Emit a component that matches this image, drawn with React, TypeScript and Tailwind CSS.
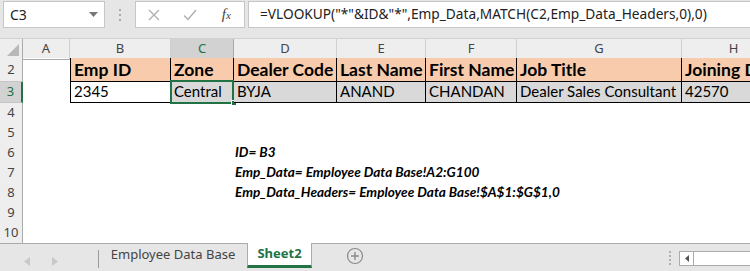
import React from 'react';

const ui = "font-['Noto_Sans','Liberation_Sans',sans-serif]";
const cell = "font-['Lato','Liberation_Sans',sans-serif]";
const gridCols = 'grid grid-cols-[23px_47px_101px_63px_103px_89px_91px_165px_104px]';

const headers = ['Emp ID', 'Zone', 'Dealer Code', 'Last Name', 'First Name', 'Job Title', 'Joining Date'];
const values = ['2345', 'Central', 'BYJA', 'ANAND', 'CHANDAN', 'Dealer Sales Consultant', '42570'];
const letters = ['A', 'B', 'C', 'D', 'E', 'F', 'G', 'H'];

const notes: Record<number, string> = {
  6: 'ID= B3',
  7: 'Emp_Data= Employee Data Base!A2:G100',
  8: 'Emp_Data_Headers= Employee Data Base!$A$1:$G$1,0',
};

const RowHead = ({ n, active }: { n: number; active?: boolean }) => (
  <div
    className={
      active
        ? `${ui} flex items-center justify-center bg-[#d2d2d2] text-[#217346] text-[13px] border-b border-[#c6c6c6] border-r-2 border-r-[#217346]`
        : `${ui} flex items-center justify-center bg-[#eeeeee] text-[#444] text-[13px] border-b border-[#c6c6c6] border-r border-r-[#ababab]`
    }
  >
    {n}
  </div>
);

const FormulaBar = () => (
  <div className={`${ui} h-[38px] bg-[#e6e6e6] flex items-start pt-[1px]`}>
    <div className="ml-[3px] w-[102px] h-[27px] bg-white border border-[#c6c6c6] flex items-center justify-between pl-[6px] pr-[6px]">
      <span className="text-[14px] text-[#222]">C3</span>
      <svg width="9" height="5" viewBox="0 0 9 5"><path d="M0 0h9L4.5 5z" fill="#777" /></svg>
    </div>
    <div className="w-[30px] h-[27px] flex flex-col items-center justify-center gap-[3px]">
      <span className="w-[2px] h-[2px] bg-[#aaa]" />
      <span className="w-[2px] h-[2px] bg-[#aaa]" />
      <span className="w-[2px] h-[2px] bg-[#aaa]" />
    </div>
    <div className="w-[110px] h-[27px] bg-white border border-[#c6c6c6] flex items-center">
      <div className="w-[36px] flex justify-center">
        <svg width="12" height="12" viewBox="0 0 12 12"><path d="M1 1l10 10M11 1L1 11" stroke="#b0b0b0" strokeWidth="1.4" /></svg>
      </div>
      <div className="w-[38px] flex justify-center">
        <svg width="14" height="12" viewBox="0 0 14 12"><path d="M1 6.5l4 4L13 1" stroke="#b0b0b0" strokeWidth="1.5" fill="none" /></svg>
      </div>
      <div className="w-[36px] flex justify-center">
        <span className="font-['Liberation_Serif',serif] italic text-[15px] text-[#444] leading-none">
          f<span className="text-[11px]">x</span>
        </span>
      </div>
    </div>
    <div className="ml-[3px] flex-1 h-[27px] bg-white border border-[#c6c6c6] border-r-0 flex items-center pl-[11px] overflow-hidden">
      <span className="text-[13.7px] text-[#222] whitespace-nowrap">
        =VLOOKUP("*"&amp;ID&amp;"*",Emp_Data,MATCH(C2,Emp_Data_Headers,0),0)
      </span>
    </div>
  </div>
);

const ColumnHeaders = () => (
  <div className={`${gridCols} ${ui} h-[20px] bg-[#eeeeee] border-t border-[#d0d0d0]`}>
    <div className="flex items-end justify-end pr-[3px] pb-[3px] border-r border-b border-[#ababab]">
      <svg width="12" height="12" viewBox="0 0 12 12"><path d="M12 0v12H0z" fill="#b8b8b8" /></svg>
    </div>
    {letters.map((l) =>
      l === 'C' ? (
        <div key={l} className="flex items-center justify-center text-[13px] text-[#217346] bg-[#d2d2d2] border-r border-[#ababab] border-b-2 border-b-[#217346]">
          {l}
        </div>
      ) : (
        <div key={l} className="flex items-center justify-center text-[13px] text-[#444] border-r border-[#d0d0d0] border-b border-b-[#ababab]">
          {l}
        </div>
      )
    )}
  </div>
);

const HeaderRow = () => (
  <div className={`${gridCols} h-[25px]`}>
    <RowHead n={2} />
    <div />
    {headers.map((h, i) => (
      <div
        key={h}
        className={`${cell} bg-[#f8cbad] font-bold text-[17.5px] text-black leading-none flex items-end pb-[3px] pl-[3px] whitespace-nowrap overflow-hidden border-r border-b border-black ${i === 0 ? 'border-l' : ''}`}
      >
        {h}
      </div>
    ))}
  </div>
);

const ValueRow = () => (
  <div className={`${gridCols} h-[21px]`}>
    <RowHead n={3} active />
    <div />
    {values.map((v, i) => (
      <div
        key={v}
        className={`${cell} relative text-[15px] text-black leading-none flex items-end pb-[3px] pl-[3px] whitespace-nowrap border-r border-b border-black ${i === 0 ? 'border-l bg-white' : 'bg-[#d9d9d9]'}`}
      >
        {v}
        {i === 1 && (
          <>
            <div className="absolute -left-[1px] -top-[2px] -right-[1px] -bottom-[2px] border-2 border-[#217346]" />
            <div className="absolute -right-[4px] -bottom-[4px] w-[6px] h-[6px] bg-[#217346] border border-white" />
          </>
        )}
      </div>
    ))}
  </div>
);

const EmptyRow = ({ n }: { n: number }) => (
  <div className={`${gridCols} h-[20px]`}>
    <RowHead n={n} />
    <div />
    <div />
    <div />
    <div className={`${cell} font-bold italic text-[13.6px] text-black leading-none flex items-end pb-[4px] pl-[1px] whitespace-nowrap`}>
      {notes[n] ?? ''}
    </div>
  </div>
);

const SheetTabs = () => (
  <div className={`${ui} h-[28px] bg-[#e6e6e6] border-t border-[#ababab] flex items-start`}>
    <div className="w-[98px] h-[22px] mt-[6px] flex items-center gap-[22px] pl-[24px]">
      <svg width="6" height="9" viewBox="0 0 6 9"><path d="M6 0v9L0 4.5z" fill="#c8c8c8" /></svg>
      <svg width="6" height="9" viewBox="0 0 6 9"><path d="M0 0v9l6-4.5z" fill="#c8c8c8" /></svg>
    </div>
    <div className="w-px h-[18px] mt-[6px] bg-[#9a9a9a]" />
    <div className="w-[148px] h-[24px] flex items-center justify-center text-[13px] text-[#444] -mt-[1px]">
      Employee Data Base
    </div>
    <div className="w-[65px] h-[25px] -mt-[1px] bg-white border-x border-[#ababab] border-b-[3px] border-b-[#217346] flex items-center justify-center text-[13px] font-bold text-[#217346]">
      Sheet2
    </div>
    <div className="w-[86px] h-[24px] flex items-center justify-center">
      <svg width="18" height="18" viewBox="0 0 18 18">
        <circle cx="9" cy="9" r="7.5" fill="none" stroke="#8a8a8a" strokeWidth="1.2" />
        <path d="M9 5v8M5 9h8" stroke="#8a8a8a" strokeWidth="1.4" />
      </svg>
    </div>
    <div className="flex-1" />
    <div className="w-[16px] h-[24px] mt-[2px] flex flex-col items-center justify-center gap-[2px]">
      <span className="w-[2px] h-[2px] bg-[#b0b0b0]" />
      <span className="w-[2px] h-[2px] bg-[#b0b0b0]" />
      <span className="w-[2px] h-[2px] bg-[#b0b0b0]" />
      <span className="w-[2px] h-[2px] bg-[#b0b0b0]" />
    </div>
    <div className="w-[71px] h-[15px] mt-[7px] ml-[1px] bg-white border border-[#ababab] border-r-0 flex">
      <div className="w-[14px] h-full border-r border-[#ababab] flex items-center justify-center">
        <svg width="4" height="7" viewBox="0 0 4 7"><path d="M4 0v7L0 3.5z" fill="#555" /></svg>
      </div>
    </div>
  </div>
);

export default function App() {
  return (
    <div className="w-[750px] h-[271px] overflow-hidden bg-white flex flex-col">
      <FormulaBar />
      <ColumnHeaders />
      <HeaderRow />
      <ValueRow />
      {[4, 5, 6, 7, 8, 9, 10].map((n) => (
        <EmptyRow key={n} n={n} />
      ))}
      <SheetTabs />
    </div>
  );
}
